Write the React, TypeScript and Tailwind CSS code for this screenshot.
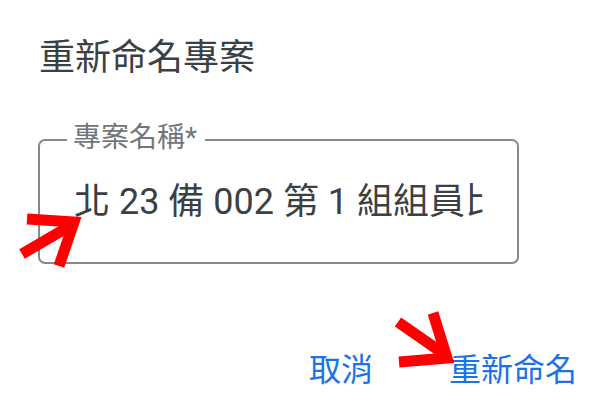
import React from "react";

const font = { fontFamily: "Roboto, 'Noto Sans CJK TC', sans-serif" };

function Arrow({ d }: { d: string }) {
  return (
    <path d={d} fill="none" stroke="#ff0000" strokeWidth={11} strokeLinejoin="miter" strokeLinecap="butt" />
  );
}

export default function App() {
  return (
    <div className="relative h-[420px] w-[597px] overflow-hidden bg-white" style={font}>
      <div className="flex flex-col pl-[39px] pt-[36px]">
        <h2 className="text-[36px] leading-[44px] font-normal text-[#3c4043]">重新命名專案</h2>

        <div className="relative mt-[59px] ml-[-1px] flex h-[125px] w-[481px] items-center rounded-[7px] border-2 border-[#85888c] pl-[34px] pr-[34px]">
          <span className="absolute left-[27px] top-[-20px] bg-white pl-[6px] pr-[8px] text-[28px] leading-[34px] text-[#72767a]">
            專案名稱*
          </span>
          <div className="overflow-hidden whitespace-nowrap text-[36px] leading-[44px] text-[#3c4043]">
            北 23 備 002 第 1 組組員比賽專案
          </div>
        </div>

        <div className="mt-[88px] flex items-center justify-end gap-[76px] pr-[20px] text-[32px] leading-[36px] text-[#1a73e8]">
          <button type="button">取消</button>
          <button type="button">重新命名</button>
        </div>
      </div>

      <svg className="pointer-events-none absolute inset-0" width="597" height="420">
        <Arrow d="M22 254 L70 226" />
        <Arrow d="M27 219 L74 222 L59 266" />
        <Arrow d="M398 322 L444 354" />
        <Arrow d="M433 313 L447 358 L399 362" />
      </svg>
    </div>
  );
}
